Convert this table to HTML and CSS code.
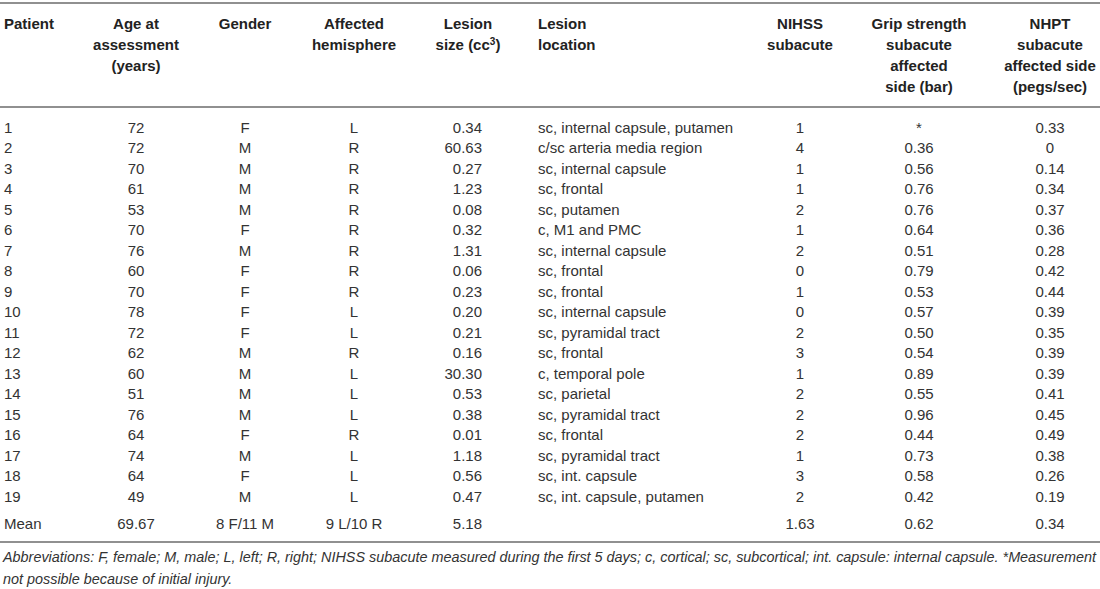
FILE: index.html
```html
<!DOCTYPE html>
<html lang="en">
<head>
<meta charset="utf-8">
<title>Patient characteristics</title>
<link rel="stylesheet" href="styles.css">
</head>
<body>
<div class="page">
<table class="data">
<colgroup>
<col class="c-pat"><col class="c-age"><col class="c-gen"><col class="c-hem"><col class="c-size"><col class="c-loc"><col class="c-nih"><col class="c-grip"><col class="c-nhpt">
</colgroup>
<thead>
<tr>
<th class="left pad-l">Patient</th>
<th>Age at<br>assessment<br>(years)</th>
<th>Gender</th>
<th>Affected<br>hemisphere</th>
<th>Lesion<br>size (cc<sup>3</sup>)</th>
<th class="left loc">Lesion<br>location</th>
<th>NIHSS<br>subacute</th>
<th class="grip">Grip strength<br>subacute<br>affected<br>side (bar)</th>
<th>NHPT<br>subacute<br>affected side<br>(pegs/sec)</th>
</tr>
</thead>
<tbody>
<tr class="first"><td class="left pad-l">1</td><td>72</td><td>F</td><td>L</td><td class="size">0.34</td><td class="left loc">sc, internal capsule, putamen</td><td>1</td><td class="grip">*</td><td>0.33</td></tr>
<tr><td class="left pad-l">2</td><td>72</td><td>M</td><td>R</td><td class="size">60.63</td><td class="left loc">c/sc arteria media region</td><td>4</td><td class="grip">0.36</td><td>0</td></tr>
<tr><td class="left pad-l">3</td><td>70</td><td>M</td><td>R</td><td class="size">0.27</td><td class="left loc">sc, internal capsule</td><td>1</td><td class="grip">0.56</td><td>0.14</td></tr>
<tr><td class="left pad-l">4</td><td>61</td><td>M</td><td>R</td><td class="size">1.23</td><td class="left loc">sc, frontal</td><td>1</td><td class="grip">0.76</td><td>0.34</td></tr>
<tr><td class="left pad-l">5</td><td>53</td><td>M</td><td>R</td><td class="size">0.08</td><td class="left loc">sc, putamen</td><td>2</td><td class="grip">0.76</td><td>0.37</td></tr>
<tr><td class="left pad-l">6</td><td>70</td><td>F</td><td>R</td><td class="size">0.32</td><td class="left loc">c, M1 and PMC</td><td>1</td><td class="grip">0.64</td><td>0.36</td></tr>
<tr><td class="left pad-l">7</td><td>76</td><td>M</td><td>R</td><td class="size">1.31</td><td class="left loc">sc, internal capsule</td><td>2</td><td class="grip">0.51</td><td>0.28</td></tr>
<tr><td class="left pad-l">8</td><td>60</td><td>F</td><td>R</td><td class="size">0.06</td><td class="left loc">sc, frontal</td><td>0</td><td class="grip">0.79</td><td>0.42</td></tr>
<tr><td class="left pad-l">9</td><td>70</td><td>F</td><td>R</td><td class="size">0.23</td><td class="left loc">sc, frontal</td><td>1</td><td class="grip">0.53</td><td>0.44</td></tr>
<tr><td class="left pad-l">10</td><td>78</td><td>F</td><td>L</td><td class="size">0.20</td><td class="left loc">sc, internal capsule</td><td>0</td><td class="grip">0.57</td><td>0.39</td></tr>
<tr><td class="left pad-l">11</td><td>72</td><td>F</td><td>L</td><td class="size">0.21</td><td class="left loc">sc, pyramidal tract</td><td>2</td><td class="grip">0.50</td><td>0.35</td></tr>
<tr><td class="left pad-l">12</td><td>62</td><td>M</td><td>R</td><td class="size">0.16</td><td class="left loc">sc, frontal</td><td>3</td><td class="grip">0.54</td><td>0.39</td></tr>
<tr><td class="left pad-l">13</td><td>60</td><td>M</td><td>L</td><td class="size">30.30</td><td class="left loc">c, temporal pole</td><td>1</td><td class="grip">0.89</td><td>0.39</td></tr>
<tr><td class="left pad-l">14</td><td>51</td><td>M</td><td>L</td><td class="size">0.53</td><td class="left loc">sc, parietal</td><td>2</td><td class="grip">0.55</td><td>0.41</td></tr>
<tr><td class="left pad-l">15</td><td>76</td><td>M</td><td>L</td><td class="size">0.38</td><td class="left loc">sc, pyramidal tract</td><td>2</td><td class="grip">0.96</td><td>0.45</td></tr>
<tr><td class="left pad-l">16</td><td>64</td><td>F</td><td>R</td><td class="size">0.01</td><td class="left loc">sc, frontal</td><td>2</td><td class="grip">0.44</td><td>0.49</td></tr>
<tr><td class="left pad-l">17</td><td>74</td><td>M</td><td>L</td><td class="size">1.18</td><td class="left loc">sc, pyramidal tract</td><td>1</td><td class="grip">0.73</td><td>0.38</td></tr>
<tr><td class="left pad-l">18</td><td>64</td><td>F</td><td>L</td><td class="size">0.56</td><td class="left loc">sc, int. capsule</td><td>3</td><td class="grip">0.58</td><td>0.26</td></tr>
<tr><td class="left pad-l">19</td><td>49</td><td>M</td><td>L</td><td class="size">0.47</td><td class="left loc">sc, int. capsule, putamen</td><td>2</td><td class="grip">0.42</td><td>0.19</td></tr>
<tr class="mean"><td class="left pad-l">Mean</td><td>69.67</td><td>8 F/11 M</td><td>9 L/10 R</td><td class="size">5.18</td><td class="left loc"></td><td>1.63</td><td class="grip">0.62</td><td>0.34</td></tr>
</tbody>
</table>
<p class="note">Abbreviations: F, female; M, male; L, left; R, right; NIHSS subacute measured during the first 5 days; c, cortical; sc, subcortical; int. capsule: internal capsule. *Measurement<br>not possible because of initial injury.</p>
</div>
</body>
</html>
```
FILE: styles.css
```css
html, body {
  margin: 0;
  padding: 0;
  background: #ffffff;
}

.page {
  width: 1100px;
  padding-top: 2px;
  font-family: "Liberation Sans", Arial, Helvetica, sans-serif;
  color: #333333;
}

.data {
  width: 1100px;
  border-collapse: collapse;
  table-layout: fixed;
  font-size: 15px;
}

.c-pat { width: 80px; }
.c-age { width: 112px; }
.c-gen { width: 106px; }
.c-hem { width: 112px; }
.c-size { width: 116px; }
.c-loc { width: 214px; }
.c-nih { width: 120px; }
.c-grip { width: 140px; }
.c-nhpt { width: 100px; }

.data thead tr {
  border-top: 2px solid #909090;
  border-bottom: 2px solid #909090;
}

.data th {
  font-weight: bold;
  color: #222222;
  line-height: 21px;
  text-align: center;
  vertical-align: top;
  padding: 9px 0 9px 0;
  white-space: nowrap;
}

.data th sup {
  font-size: 10px;
  line-height: 0;
  vertical-align: 5px;
}

.data td {
  text-align: center;
  line-height: 20.5px;
  padding: 0;
  white-space: nowrap;
}

.data tr.first td {
  padding-top: 9.5px;
}

.data tr.mean {
  border-bottom: 2px solid #909090;
}

.data tr.mean td {
  padding-top: 6.5px;
  padding-bottom: 7px;
}

.data .left {
  text-align: left;
}

.data .pad-l {
  padding-left: 4px;
}

.data .loc {
  padding-left: 12px;
}

.data td.size {
  text-align: right;
  padding-right: 44px;
}

.data .grip {
  padding-right: 22px;
}

.note {
  margin: 3px 0 0 0;
  padding-left: 3px;
  font-size: 14.4px;
  font-style: italic;
  line-height: 22px;
  color: #333333;
  white-space: nowrap;
}
```
